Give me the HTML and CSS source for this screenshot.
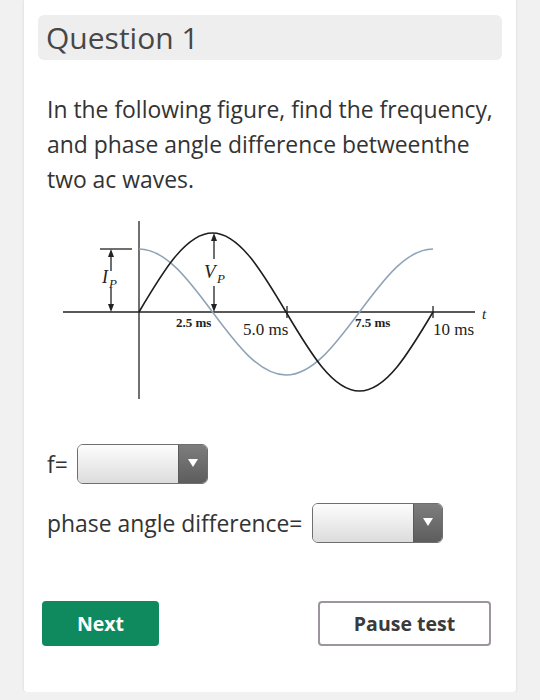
FILE: index.html
```html
<!DOCTYPE html>
<html lang="en">
<head>
<meta charset="utf-8">
<title>Question 1</title>
<link rel="stylesheet" href="styles.css">
</head>
<body>
<div class="card">
  <h1 class="title">Question 1</h1>
  <div class="content">
    <p class="prompt">In the following figure, find the frequency, and phase angle difference betweenthe two ac waves.</p>
    <svg class="figure" width="440" height="210" viewBox="0 0 440 210" xmlns="http://www.w3.org/2000/svg">
      <g fill="none" stroke="#222" stroke-width="1.3">
        <line x1="84" y1="16" x2="84" y2="194"/>
        <line x1="8" y1="107" x2="420" y2="107"/>
        <line x1="45" y1="44" x2="77" y2="44"/>
        <line x1="232" y1="101" x2="232" y2="113"/>
        <line x1="378" y1="101" x2="378" y2="113"/>
        <line x1="56" y1="48" x2="56" y2="66"/>
        <line x1="56" y1="83" x2="56" y2="102"/>
        <line x1="159" y1="32" x2="159" y2="54"/>
        <line x1="159" y1="81" x2="159" y2="102"/>
      </g>
      <g fill="#222">
        <polygon points="56,44 53,52 59,52"/>
        <polygon points="56,107 53,99 59,99"/>
        <polygon points="159,28 156,36 162,36"/>
        <polygon points="159,107 156,99 162,99"/>
      </g>
      <path d="M84,44 C110.6,44 133.53,74.73 157.5,107 C181.47,139.27 204.4,170 231,170 C257.6,170 280.53,139.27 304.5,107 C328.47,74.73 351.4,44 378,44" fill="none" stroke="#8ea3b8" stroke-width="1.5"/>
      <path d="M84,107 C107.97,66.53 130.9,28 157.5,28 C184.1,28 207.03,66.53 231,107 C254.97,147.47 277.9,186 304.5,186 C331.1,186 354.03,147.47 378,107" fill="none" stroke="#1e1e1e" stroke-width="1.6"/>
      <g class="lbl-it">
        <text x="47" y="78" font-size="18">I</text>
        <text x="54" y="83" font-size="13">P</text>
        <text x="149" y="73" font-size="19">V</text>
        <text x="162" y="78" font-size="13">P</text>
        <text x="427" y="114" font-size="15">t</text>
      </g>
      <g class="lbl">
        <text x="121" y="122" class="small">2.5 ms</text>
        <text x="188" y="130" class="big">5.0 ms</text>
        <text x="300" y="122" class="small">7.5 ms</text>
        <text x="378" y="130" class="big">10 ms</text>
      </g>
    </svg>
    <div class="field field-f">
      <span class="label">f=</span>
      <span class="select"><span class="select-box"></span><span class="select-btn"><span class="tri"></span></span></span>
    </div>
    <div class="field field-phase">
      <span class="label">phase angle difference=</span>
      <span class="select"><span class="select-box"></span><span class="select-btn"><span class="tri"></span></span></span>
    </div>
  </div>
  <div class="actions">
    <button class="btn btn-next">Next</button>
    <button class="btn btn-pause">Pause test</button>
  </div>
</div>
</body>
</html>
```
FILE: styles.css
```css
html, body {
  margin: 0;
  padding: 0;
}
body {
  background: #f1f1f1;
  font-family: "Open Sans", "DejaVu Sans", sans-serif;
  color: #333;
}
.card {
  margin: 0 24px;
  background: #fff;
  min-height: 692px;
  box-sizing: border-box;
  padding: 15px 14px 0;
  box-shadow: 0 0 3px rgba(0, 0, 0, 0.12);
  border-radius: 0 0 3px 3px;
}
.title {
  margin: 0;
  height: 45px;
  line-height: 45px;
  background: #eeeeee;
  border-radius: 6px;
  padding: 0 8px;
  font-size: 30px;
  font-weight: 400;
  color: #474747;
}
.content {
  padding: 0 9px;
}
.prompt {
  margin: 32px 0 0;
  font-size: 22.9px;
  line-height: 35px;
  color: #333;
}
.figure {
  display: block;
  margin: 8px 0 0 8px;
}
.lbl-it text {
  font-family: "Liberation Serif", serif;
  font-style: italic;
  fill: #222;
}
.lbl text {
  font-family: "Liberation Serif", serif;
  fill: #222;
}
.lbl .small {
  font-size: 13px;
  font-weight: 700;
}
.lbl .big {
  font-size: 17px;
}
.field {
  display: flex;
  align-items: center;
  gap: 9px;
  font-size: 22.9px;
  color: #333;
}
.field-f {
  margin-top: 29px;
}
.field-phase {
  margin-top: 19px;
  gap: 10px;
}
.select {
  display: flex;
  width: 131px;
  height: 40px;
  box-sizing: border-box;
  border: 1px solid #6f6f6f;
  border-radius: 6px;
  overflow: hidden;
}
.select-box {
  flex: 1;
  background: linear-gradient(#fdfdfd, #dcdcdc);
}
.select-btn {
  width: 28px;
  border-left: 1px solid #5a5a5a;
  background: linear-gradient(#7d7d7d, #5d5d5d);
  display: flex;
  align-items: center;
  justify-content: center;
}
.tri {
  width: 0;
  height: 0;
  border-left: 5px solid transparent;
  border-right: 5px solid transparent;
  border-top: 8px solid #fff;
  margin-top: -3px;
}
.actions {
  display: flex;
  justify-content: space-between;
  padding: 0 11px 0 4px;
  margin-top: 58px;
}
.btn {
  height: 45px;
  box-sizing: border-box;
  border-radius: 4px;
  font-family: "Open Sans", "DejaVu Sans", sans-serif;
  font-weight: 700;
  font-size: 19.5px;
  padding: 0;
  cursor: pointer;
}
.btn-next {
  width: 117px;
  background: #0f8a5e;
  color: #fff;
  border: none;
}
.btn-pause {
  width: 173px;
  background: #fff;
  color: #3a3a3a;
  border: 2px solid #9c95a0;
}
```
